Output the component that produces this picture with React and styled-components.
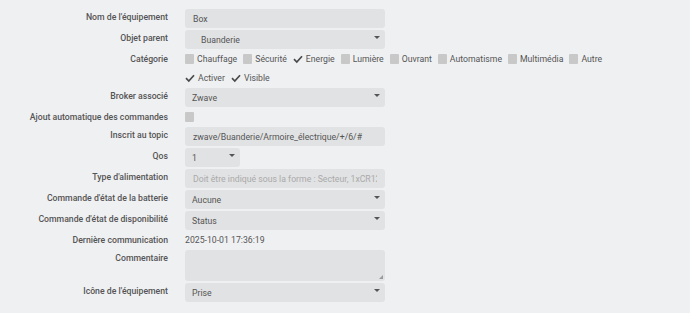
import React from "react";
import styled, { createGlobalStyle } from "styled-components";

const Global = createGlobalStyle`
  html, body { margin: 0; padding: 0; background: #eff0f2; }
  body { font-family: Roboto, "Liberation Sans", sans-serif; font-size: 8.7px; color: #555; }
  * { box-sizing: border-box; }
`;

const Form = styled.form`
  width: 690px;
  height: 313px;
  padding-top: 9px;
  background: #eff0f2;
`;

const Row = styled.div`
  display: grid;
  grid-template-columns: 168px 1fr;
  column-gap: 17px;
  margin-bottom: ${(p) => p.$gap ?? 2}px;
  min-height: ${(p) => p.$h ?? 19}px;
`;

const Label = styled.label`
  text-align: right;
  font-weight: 500;
  color: #555;
  line-height: ${(p) => p.$lh ?? 17}px;
  white-space: nowrap;
`;

const Field = styled.input`
  display: block;
  width: ${(p) => p.$w ?? 200}px;
  height: 19px;
  border: none;
  border-radius: 3px;
  background: #e1e2e3;
  color: #555;
  font: inherit;
  padding: 0 8px;
  outline: none;
  &::placeholder { color: #aaa; }
`;

const SelectWrap = styled.div`
  position: relative;
  width: ${(p) => p.$w ?? 200}px;
  height: 19px;
  &::after {
    content: "";
    position: absolute;
    right: 5px;
    top: 6px;
    border-left: 3px solid transparent;
    border-right: 3px solid transparent;
    border-top: 3px solid #555;
  }
`;

const Select = styled.select`
  appearance: none;
  -webkit-appearance: none;
  display: block;
  width: 100%;
  height: 19px;
  border: none;
  border-radius: 3px;
  background: #e1e2e3;
  color: #555;
  font: inherit;
  padding: 0 0 0 ${(p) => p.$indent ?? 7}px;
  outline: none;
`;

const AreaWrap = styled.div`
  position: relative;
  width: 200px;
  height: 31px;
  &::after {
    content: "";
    position: absolute;
    right: 2px;
    bottom: 2px;
    border-left: 4px solid transparent;
    border-bottom: 4px solid #9a9a9a;
  }
`;

const TextArea = styled.textarea`
  display: block;
  width: 200px;
  height: 31px;
  border: none;
  border-radius: 3px;
  background: #e1e2e3;
  color: #555;
  font: inherit;
  padding: 3px 8px;
  outline: none;
  resize: none;
`;

const Checks = styled.div`
  display: flex;
  align-items: center;
  height: ${(p) => p.$h ?? 16}px;
  gap: 6px;
`;

const CheckItem = styled.label`
  display: flex;
  align-items: center;
  gap: 3px;
  color: #555;
  white-space: nowrap;
`;

const Box = styled.span`
  display: inline-block;
  width: 9px;
  height: 10px;
  background: #c8c8c8;
  border-radius: 1px;
`;

const Tick = styled.svg`
  width: 10px;
  height: 10px;
  display: block;
`;

const Plain = styled.div`
  line-height: 16px;
  color: #555;
`;

function Check({ checked, children }) {
  return (
    <CheckItem>
      {checked ? (
        <Tick viewBox="0 0 10 10">
          <path d="M1 5.2 L3.8 8 L9 2.2" fill="none" stroke="#4a4a4a" strokeWidth="1.7" />
        </Tick>
      ) : (
        <Box />
      )}
      {children}
    </CheckItem>
  );
}

function Sel({ value, w, indent }) {
  return (
    <SelectWrap $w={w}>
      <Select $indent={indent} defaultValue={value}>
        <option>{value}</option>
      </Select>
    </SelectWrap>
  );
}

const cats = [
  ["Chauffage", false],
  ["Sécurité", false],
  ["Energie", true],
  ["Lumière", false],
  ["Ouvrant", false],
  ["Automatisme", false],
  ["Multimédia", false],
  ["Autre", false],
];

export default function App() {
  return (
    <>
      <Global />
      <Form>
        <Row>
          <Label>Nom de l'équipement</Label>
          <Field defaultValue="Box" />
        </Row>
        <Row>
          <Label>Objet parent</Label>
          <Sel value="Buanderie" indent={16} />
        </Row>
        <Row $h={16}>
          <Label $lh={16}>Catégorie</Label>
          <Checks>
            {cats.map(([n, c]) => (
              <Check key={n} checked={c}>{n}</Check>
            ))}
          </Checks>
        </Row>
        <Row $h={17}>
          <Label />
          <Checks $h={17}>
            <Check checked>Activer</Check>
            <Check checked>Visible</Check>
          </Checks>
        </Row>
        <Row>
          <Label>Broker associé</Label>
          <Sel value="Zwave" />
        </Row>
        <Row $h={16}>
          <Label $lh={16}>Ajout automatique des commandes</Label>
          <Checks>
            <Check />
          </Checks>
        </Row>
        <Row>
          <Label>Inscrit au topic</Label>
          <Field defaultValue="zwave/Buanderie/Armoire_électrique/+/6/#" />
        </Row>
        <Row>
          <Label>Qos</Label>
          <Sel value="1" w={55} />
        </Row>
        <Row>
          <Label>Type d'alimentation</Label>
          <Field placeholder="Doit être indiqué sous la forme : Secteur, 1xCR123A" />
        </Row>
        <Row>
          <Label>Commande d'état de la batterie</Label>
          <Sel value="Aucune" />
        </Row>
        <Row>
          <Label>Commande d'état de disponibilité</Label>
          <Sel value="Status" />
        </Row>
        <Row $h={16}>
          <Label $lh={16}>Dernière communication</Label>
          <Plain>2025-10-01 17:36:19</Plain>
        </Row>
        <Row $h={31}>
          <Label>Commentaire</Label>
          <AreaWrap>
            <TextArea />
          </AreaWrap>
        </Row>
        <Row>
          <Label>Icône de l'équipement</Label>
          <Sel value="Prise" />
        </Row>
      </Form>
    </>
  );
}
